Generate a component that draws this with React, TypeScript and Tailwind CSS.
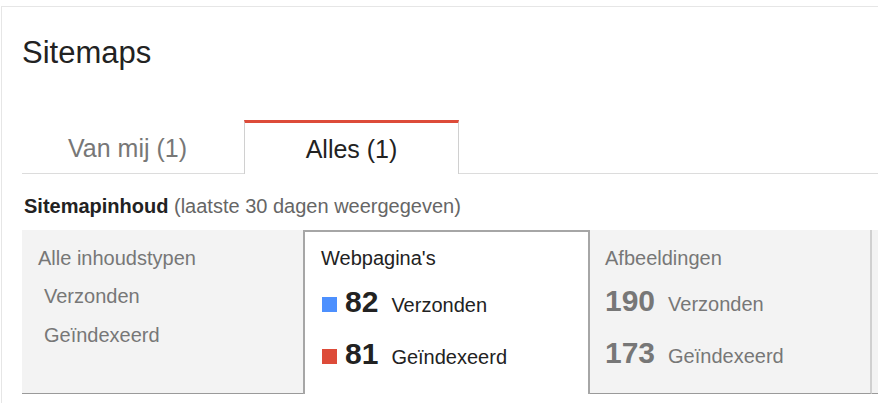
const content = [
  {
    title: 'Alle inhoudstypen',
    active: false,
    rows: [
      { label: 'Verzonden' },
      { label: 'Geïndexeerd' },
    ],
  },
];

function Square({ color }: { color: string }) {
  return <span className={`ml-px mr-[8px] inline-block h-[15px] w-[15px] ${color}`} />;
}

function StatRow({
  value,
  label,
  square,
  dim,
  gap,
}: {
  value: string;
  label: string;
  square?: string;
  dim?: boolean;
  gap: string;
}) {
  return (
    <div className={`${gap} flex items-baseline leading-[36px]`}>
      {square && <Square color={square} />}
      <span className={`text-[30px] font-bold ${dim ? 'text-[#777]' : 'text-[#222]'}`}>{value}</span>
      <span className={`ml-[13px] text-[20px] ${dim ? 'text-[#777]' : 'text-[#222]'}`}>{label}</span>
    </div>
  );
}

export default function App() {
  return (
    <div className="h-[403px] w-[878px] overflow-hidden bg-white font-['Liberation_Sans',Arial,sans-serif]">
      <div className="ml-px mt-[6px] h-[420px] border-l border-t border-[#e6e6e6] pl-[20px]">
        <h1 className="mt-[28px] text-[31px] leading-[36px] text-[#222]">Sitemaps</h1>

        {/* tabs */}
        <div className="mt-[49px] flex h-[54px] border-b border-[#dcdcdc]">
          <div className="flex w-[222px] items-center border-t-[3px] border-transparent pl-[46px] text-[25px] leading-[28px] text-[#777]">
            Van mij (1)
          </div>
          <div className="-mb-px flex w-[215px] items-center justify-center border-x border-t-[3px] border-[#d0d0d0] border-t-[#dd4b39] bg-white text-[25px] leading-[28px] text-[#222]">
            Alles (1)
          </div>
        </div>

        <p className="mt-[20px] pl-[2px] text-[20px] leading-[24px] text-[#666]">
          <span className="font-bold text-[#222]">Sitemapinhoud</span> (laatste 30 dagen weergegeven)
        </p>

        {/* content type boxes */}
        <div className="mt-[12px] flex h-[164px]">
          {content.map((c) => (
            <div key={c.title} className="w-[281px] border-b border-[#9a9a9a] bg-[#f3f3f3] pl-[16px] pt-[16px]">
              <div className="text-[20px] leading-[24px] text-[#777]">{c.title}</div>
              <div className="mt-[14px] pl-[6px] text-[20px] leading-[24px] text-[#777]">{c.rows[0].label}</div>
              <div className="mt-[15px] pl-[6px] text-[20px] leading-[24px] text-[#777]">{c.rows[1].label}</div>
            </div>
          ))}

          <div className="w-[287px] border-x-2 border-t-2 border-[#a6a6a6] bg-white pl-[16px] pt-[14px]">
            <div className="text-[20px] leading-[24px] text-[#222]">Webpagina's</div>
            <StatRow value="82" label="Verzonden" square="bg-[#4d90fe]" gap="mt-[14px]" />
            <StatRow value="81" label="Geïndexeerd" square="bg-[#dd4b39]" gap="mt-[13px]" />
          </div>

          <div className="w-[282px] border-b border-r-2 border-[#9a9a9a] border-r-[#d0d0d0] bg-[#f3f3f3] pl-[15px] pt-[16px]">
            <div className="text-[20px] leading-[24px] text-[#777]">Afbeeldingen</div>
            <StatRow value="190" label="Verzonden" dim gap="mt-[13px]" />
            <StatRow value="173" label="Geïndexeerd" dim gap="mt-[13px]" />
          </div>

          <div className="flex-1 border-b border-[#9a9a9a] bg-[#f3f3f3]" />
        </div>
      </div>
    </div>
  );
}
